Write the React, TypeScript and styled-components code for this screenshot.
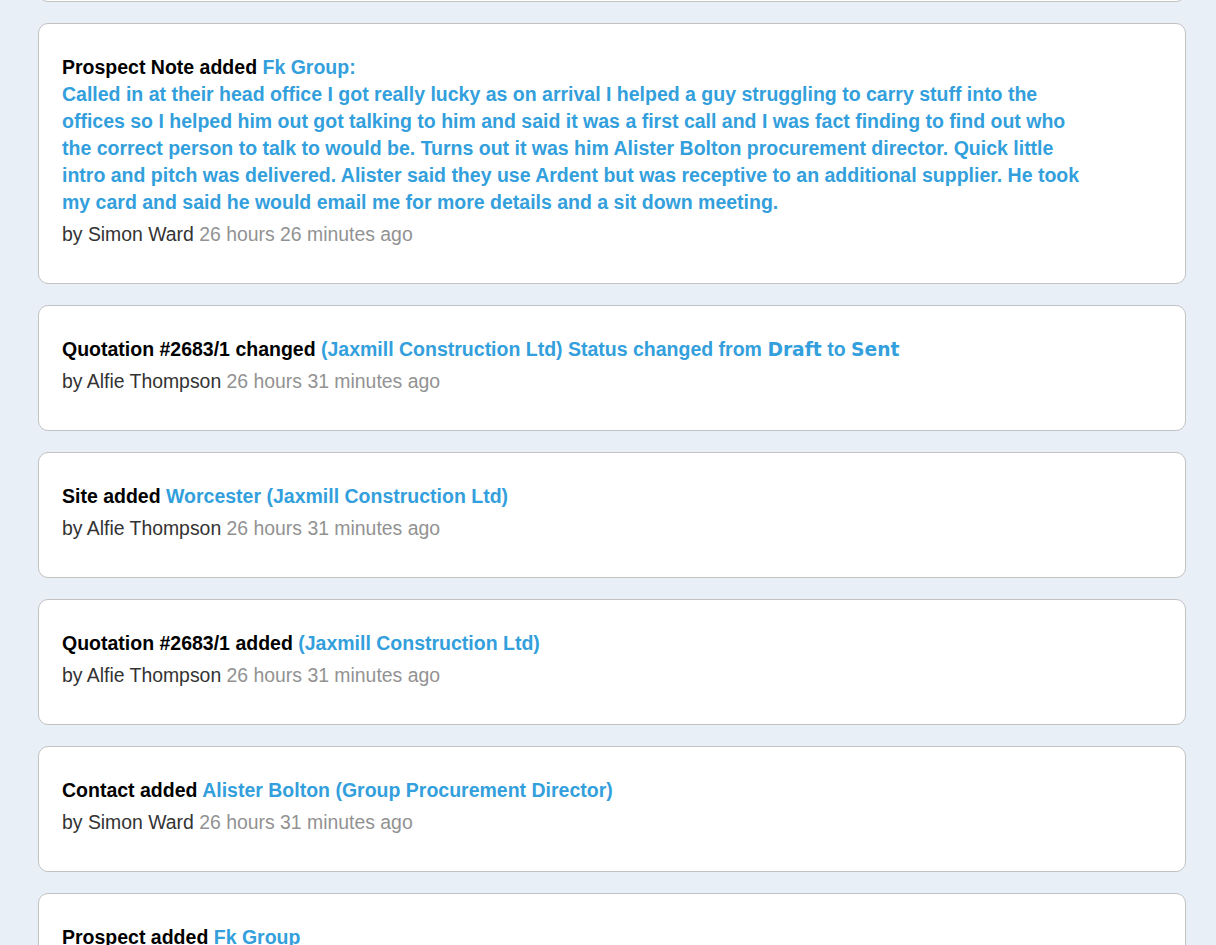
import React from 'react';
import styled, { createGlobalStyle } from 'styled-components';

type Entry = {
  action: string;
  by: string;
  ago: string;
  content: React.ReactNode;
};

const GlobalStyle = createGlobalStyle`
  html, body {
    margin: 0;
    padding: 0;
    background: #e8eff7;
    overflow: hidden;
  }
  body {
    font-family: "Liberation Sans", Arial, sans-serif;
  }
`;

const Feed = styled.div`
  display: flex;
  flex-direction: column;
  gap: 21px;
  padding: 0 30px 0 38px;
  margin-top: -124px;
`;

const Card = styled.div`
  background: #ffffff;
  border: 1px solid #c2c2c2;
  border-radius: 10px;
  padding: 30px 23px;
`;

// card scrolled out of view above the first visible entry
const ScrolledCard = styled(Card)`
  height: 64px;
`;

const Heading = styled.div`
  font-size: 19.5px;
  line-height: 27px;
  font-weight: 700;
  color: #000000;
`;

const Link = styled.span`
  color: #339fdc;
`;

const Note = styled.div`
  max-width: 1025px;
`;

const Strong = styled.strong`
  font-family: "DejaVu Sans", Verdana, sans-serif;
  font-size: 18.7px;
`;

const Meta = styled.div`
  margin: 5px 0;
  font-size: 19.4px;
  line-height: 27px;
  color: #333333;
`;

const Ago = styled.span`
  color: #929292;
`;

const entries: Entry[] = [
  {
    action: 'Prospect Note added',
    by: 'Simon Ward',
    ago: '26 hours 26 minutes ago',
    content: (
      <>
        Fk Group:
        <Note>
          Called in at their head office I got really lucky as on arrival I helped a guy
          struggling to carry stuff into the offices so I helped him out got talking to him
          and said it was a first call and I was fact finding to find out who the correct
          person to talk to would be. Turns out it was him Alister Bolton procurement
          director. Quick little intro and pitch was delivered. Alister said they use Ardent
          but was receptive to an additional supplier. He took my card and said he would
          email me for more details and a sit down meeting.
        </Note>
      </>
    ),
  },
  {
    action: 'Quotation #2683/1 changed',
    by: 'Alfie Thompson',
    ago: '26 hours 31 minutes ago',
    content: (
      <>
        (Jaxmill Construction Ltd) Status changed from <Strong>Draft</Strong> to{' '}
        <Strong>Sent</Strong>
      </>
    ),
  },
  {
    action: 'Site added',
    by: 'Alfie Thompson',
    ago: '26 hours 31 minutes ago',
    content: 'Worcester (Jaxmill Construction Ltd)',
  },
  {
    action: 'Quotation #2683/1 added',
    by: 'Alfie Thompson',
    ago: '26 hours 31 minutes ago',
    content: '(Jaxmill Construction Ltd)',
  },
  {
    action: 'Contact added',
    by: 'Simon Ward',
    ago: '26 hours 31 minutes ago',
    content: 'Alister Bolton (Group Procurement Director)',
  },
  {
    action: 'Prospect added',
    by: 'Simon Ward',
    ago: '26 hours 31 minutes ago',
    content: 'Fk Group',
  },
];

const App = () => {
  return (
    <>
      <GlobalStyle />
      <Feed>
        <ScrolledCard />
        {entries.map((e, i) => (
          <Card key={i}>
            <Heading>
              {e.action} <Link>{e.content}</Link>
            </Heading>
            <Meta>
              by {e.by} <Ago>{e.ago}</Ago>
            </Meta>
          </Card>
        ))}
      </Feed>
    </>
  );
};

export default App;
